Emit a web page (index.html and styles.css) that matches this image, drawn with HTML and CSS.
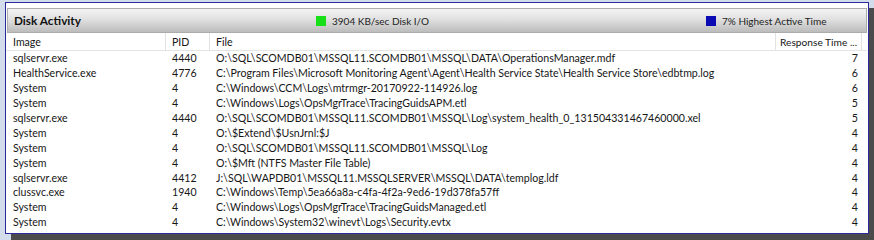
FILE: index.html
```html
<!DOCTYPE html>
<html lang="en">
<head>
  <meta charset="UTF-8" />
  <title>Disk Activity</title>
  <link rel="stylesheet" href="styles.css">
</head>
<body>

  <div class="window">
    <!-- Section header -->
    <div class="bar">
      <div class="bar-title">Disk Activity</div>
      <div class="bar-stat stat-io"><span class="swatch green"></span>3904 KB/sec Disk I/O</div>
      <div class="bar-stat stat-active"><span class="swatch blue"></span>7% Highest Active Time</div>
    </div>

    <!-- Column headers -->
    <div class="row head">
      <div class="cell">Image</div>
      <div class="cell">PID</div>
      <div class="cell">File</div>
      <div class="cell">Response Time ...</div>
    </div>

    <div class="rows" id="rows"></div>
  </div>

  <script>
    var data = [
      ['sqlservr.exe', '4440', 'O:\\SQL\\SCOMDB01\\MSSQL11.SCOMDB01\\MSSQL\\DATA\\OperationsManager.mdf', '7'],
      ['HealthService.exe', '4776', 'C:\\Program Files\\Microsoft Monitoring Agent\\Agent\\Health Service State\\Health Service Store\\edbtmp.log', '6'],
      ['System', '4', 'C:\\Windows\\CCM\\Logs\\mtrmgr-20170922-114926.log', '6'],
      ['System', '4', 'C:\\Windows\\Logs\\OpsMgrTrace\\TracingGuidsAPM.etl', '5'],
      ['sqlservr.exe', '4440', 'O:\\SQL\\SCOMDB01\\MSSQL11.SCOMDB01\\MSSQL\\Log\\system_health_0_131504331467460000.xel', '5'],
      ['System', '4', 'O:\\$Extend\\$UsnJrnl:$J', '4'],
      ['System', '4', 'O:\\SQL\\SCOMDB01\\MSSQL11.SCOMDB01\\MSSQL\\Log', '4'],
      ['System', '4', 'O:\\$Mft (NTFS Master File Table)', '4'],
      ['sqlservr.exe', '4412', 'J:\\SQL\\WAPDB01\\MSSQL11.MSSQLSERVER\\MSSQL\\DATA\\templog.ldf', '4'],
      ['clussvc.exe', '1940', 'C:\\Windows\\Temp\\5ea66a8a-c4fa-4f2a-9ed6-19d378fa57ff', '4'],
      ['System', '4', 'C:\\Windows\\Logs\\OpsMgrTrace\\TracingGuidsManaged.etl', '4'],
      ['System', '4', 'C:\\Windows\\System32\\winevt\\Logs\\Security.evtx', '4']
    ];

    var html = '';
    data.forEach(function (r) {
      html += '<div class="row">' +
        '<div class="cell">' + r[0] + '</div>' +
        '<div class="cell">' + r[1] + '</div>' +
        '<div class="cell">' + r[2] + '</div>' +
        '<div class="cell num">' + r[3] + '</div>' +
        '</div>';
    });
    document.getElementById('rows').innerHTML = html;
  </script>

</body>
</html>
```

FILE: styles.css
```css
* {
  margin: 0; padding: 0;
  box-sizing: border-box;
}

body, html {
  height: 100%;
  font-family: 'Lato', 'Open Sans', sans-serif;
  background: #d3dcea;
  color: #161616;
  overflow: hidden;
}

.window {
  margin: 2px 0 0 5px;
  width: 864px;
  height: 232px;
  background: white;
  border: 1px solid #2a2a9c;
  box-shadow: 6px 6px 0 #4b4b4b;
  padding: 5px 1px 0 0;
}

.bar {
  height: 25px;
  margin-left: 1px;
  display: flex;
  align-items: center;
  background: linear-gradient(#f4f4f4, #e0e0e0 45%, #bcbcbc);
  border: 1px solid #acacac;
}

.bar-title {
  width: 308px;
  padding-left: 6px;
  font-size: 11.8px;
  font-weight: 700;
  color: #111;
}

.bar-stat {
  display: flex;
  align-items: center;
  font-size: 10px;
  color: #222;
}

.stat-io {
  width: 390px;
}

.swatch {
  width: 10px;
  height: 10px;
  margin-right: 6px;
}

.green { background: #18e018; }
.blue { background: #0a0ab4; }

.row {
  display: grid;
  grid-template-columns: 160px 44px 566px 86px;
  height: 14.9px;
  align-items: center;
  font-size: 10.6px;
}

.row .cell {
  padding-left: 6px;
  white-space: nowrap;
  overflow: hidden;
}

.row .cell:first-child {
  padding-left: 7px;
}

.head {
  height: 18px;
  border-bottom: 1px solid #e4e4e4;
}

.head .cell {
  height: 100%;
  display: flex;
  align-items: center;
  border-right: 1px solid #e2e2e2;
}

.head .cell:last-child {
  padding-left: 4px;
  font-size: 10.2px;
}

.num {
  text-align: right;
  padding-right: 4px;
}
```
